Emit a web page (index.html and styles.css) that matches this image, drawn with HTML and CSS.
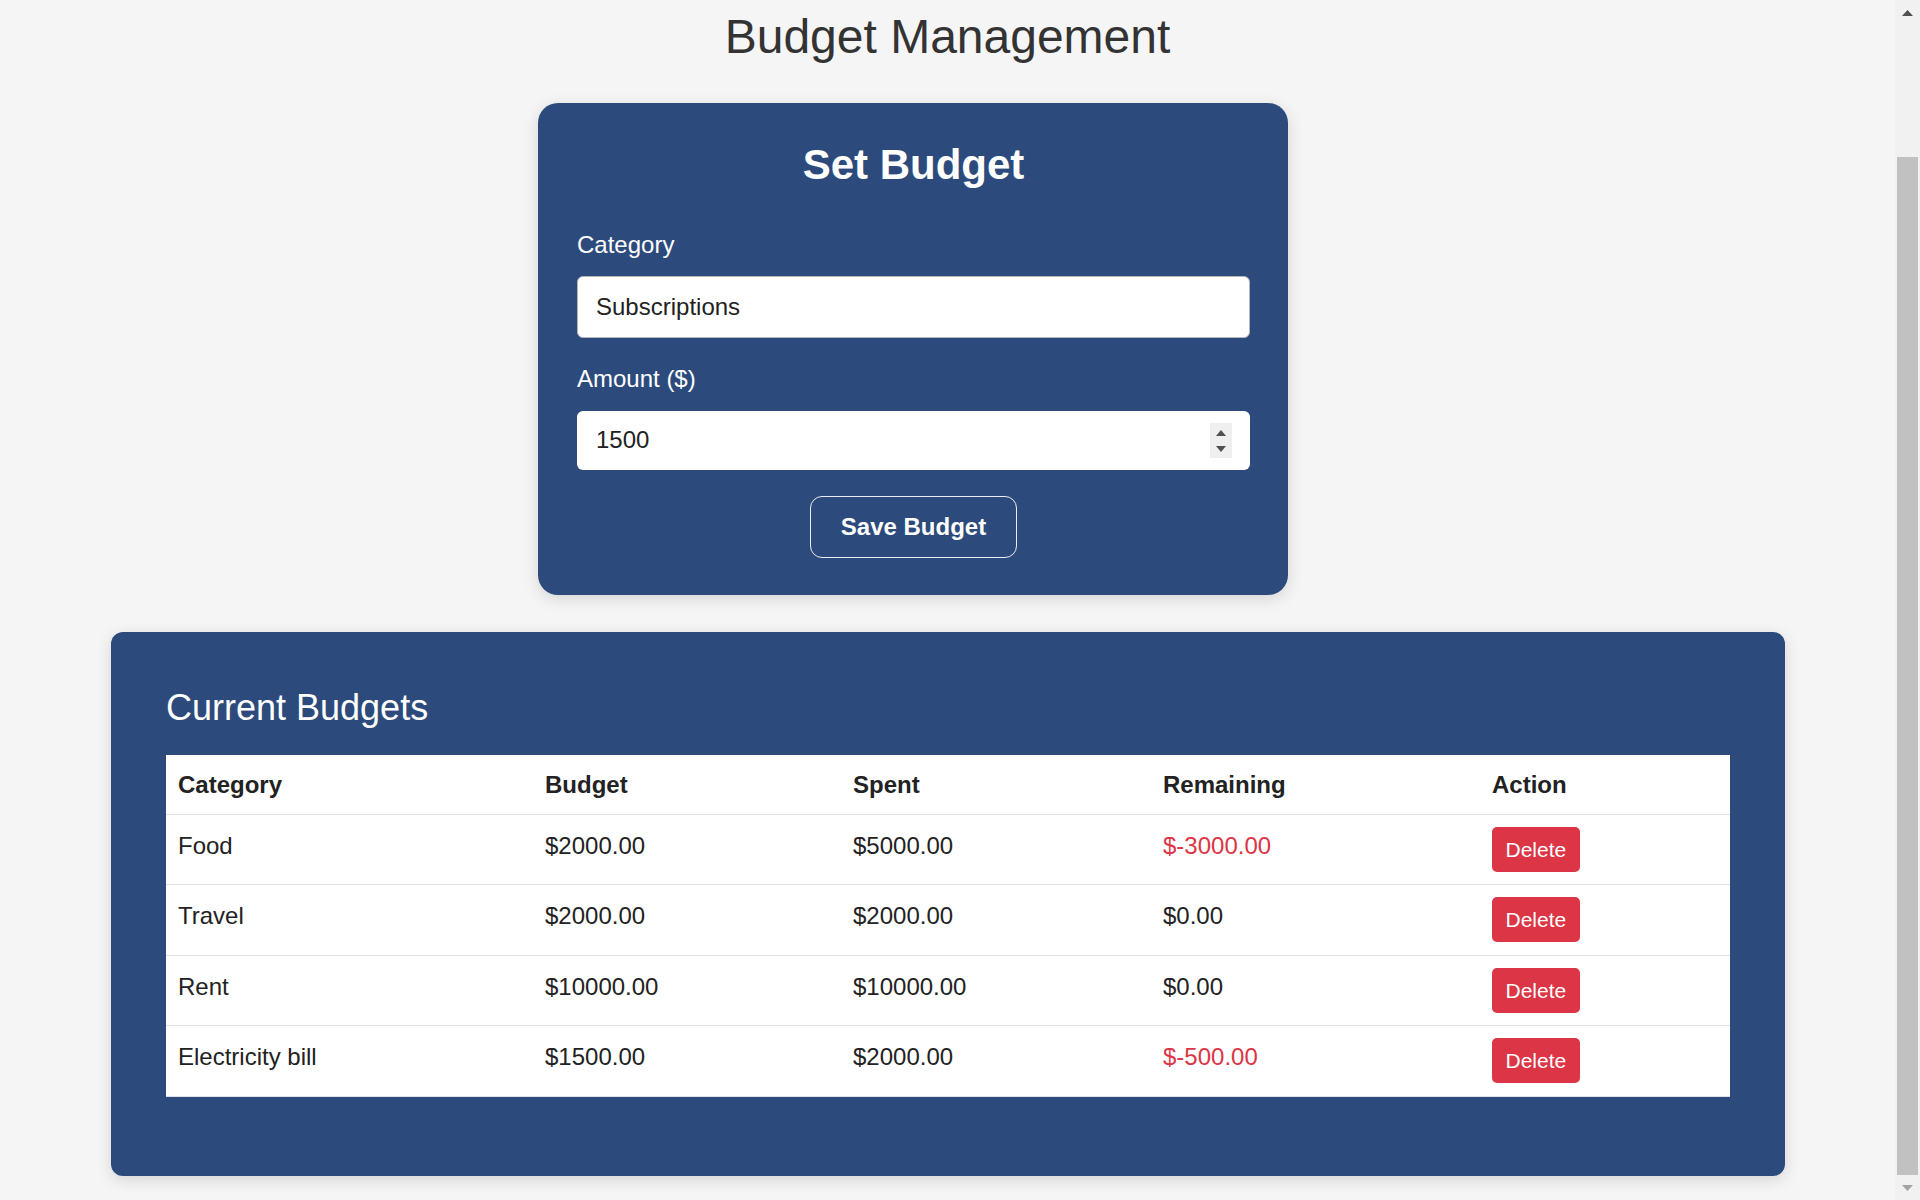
FILE: index.html
```html
<!DOCTYPE html>
<html lang="en">
<head>
<meta charset="utf-8">
<title>Budget Management</title>
<link rel="stylesheet" href="styles.css">
</head>
<body>
<main class="page">
  <h1 class="page-title">Budget Management</h1>

  <form class="budget-form">
    <h2 class="form-title">Set Budget</h2>
    <div class="field">
      <label class="field-label" for="category">Category</label>
      <input class="text-input" id="category" type="text" value="Subscriptions">
    </div>
    <div class="field">
      <label class="field-label" for="amount">Amount ($)</label>
      <div class="number-input">
        <input class="number-value" id="amount" type="text" value="1500">
        <span class="spinner">
          <svg class="spin-arrow" width="10" height="6" viewBox="0 0 10 6"><path d="M5 0 L10 6 L0 6 Z" fill="#505050"/></svg>
          <svg class="spin-arrow" width="10" height="6" viewBox="0 0 10 6"><path d="M0 0 L10 0 L5 6 Z" fill="#505050"/></svg>
        </span>
      </div>
    </div>
    <div class="form-actions">
      <button type="button" class="save-btn">Save Budget</button>
    </div>
  </form>

  <section class="budgets">
    <h2 class="budgets-title">Current Budgets</h2>
    <table class="budget-table">
      <colgroup>
        <col class="col-category">
        <col class="col-budget">
        <col class="col-spent">
        <col class="col-remaining">
        <col class="col-action">
      </colgroup>
      <thead>
        <tr><th>Category</th><th>Budget</th><th>Spent</th><th>Remaining</th><th>Action</th></tr>
      </thead>
      <tbody>
        <tr><td>Food</td><td>$2000.00</td><td>$5000.00</td><td class="negative">$-3000.00</td><td><button type="button" class="delete-btn">Delete</button></td></tr>
        <tr><td>Travel</td><td>$2000.00</td><td>$2000.00</td><td>$0.00</td><td><button type="button" class="delete-btn">Delete</button></td></tr>
        <tr><td>Rent</td><td>$10000.00</td><td>$10000.00</td><td>$0.00</td><td><button type="button" class="delete-btn">Delete</button></td></tr>
        <tr><td>Electricity bill</td><td>$1500.00</td><td>$2000.00</td><td class="negative">$-500.00</td><td><button type="button" class="delete-btn">Delete</button></td></tr>
      </tbody>
    </table>
  </section>
</main>

<aside class="scrollbar" aria-hidden="true">
  <div class="scroll-btn">
    <svg width="11" height="6" viewBox="0 0 11 6"><path d="M5.5 0 L11 6 L0 6 Z" fill="#505050"/></svg>
  </div>
  <div class="scroll-track">
    <div class="scroll-thumb"></div>
  </div>
  <div class="scroll-btn">
    <svg width="11" height="6" viewBox="0 0 11 6"><path d="M0 0 L11 0 L5.5 6 Z" fill="#a3a3a3"/></svg>
  </div>
</aside>
</body>
</html>
```

FILE: styles.css
```css
html, body {
  margin: 0;
  height: 100%;
}

body {
  display: flex;
  overflow: hidden;
  background: #f5f5f5;
  font-family: "Liberation Sans", Arial, sans-serif;
  color: #222;
}

.page {
  flex: 1;
  min-width: 0;
  padding: 9px 0 0;
}

/* imitation of the browser scrollbar (page scrolled to the bottom) */
.scrollbar {
  flex: 0 0 25px;
  display: flex;
  flex-direction: column;
  height: 1200px;
  background: #f1f1f1;
}

.scroll-btn {
  flex: 0 0 25px;
  display: flex;
  align-items: center;
  justify-content: center;
}

.scroll-btn svg {
  display: block;
}

.scroll-track {
  flex: 1;
  display: flex;
  flex-direction: column;
  justify-content: flex-end;
}

.scroll-thumb {
  height: 1018px;
  margin: 0 2px;
  background: #c1c1c1;
}

.page-title {
  margin: 0;
  font-size: 48px;
  font-weight: normal;
  line-height: normal;
  text-align: center;
  color: #333;
}

.budget-form {
  width: 750px;
  box-sizing: border-box;
  margin: 38.5px 0 0 calc(50% - 409.5px);
  padding: 38px 38px 37px 39px;
  background: #2c4b7c;
  border-radius: 20px;
  box-shadow: 0 4px 16px rgba(0, 0, 0, 0.13);
}

.form-title {
  margin: 0 0 42px;
  font-size: 42px;
  font-weight: bold;
  line-height: normal;
  text-align: center;
  color: #fff;
}

.field + .field {
  margin-top: 27.5px;
}

.field-label {
  display: block;
  margin-bottom: 17.5px;
  font-size: 24px;
  line-height: normal;
  color: #fff;
}

.text-input {
  display: block;
  width: 100%;
  height: 61.5px;
  box-sizing: border-box;
  margin: 0;
  padding: 0 18px;
  border: 1.5px solid #b4b4b4;
  border-radius: 6px;
  background: #fff;
  font-family: "Liberation Sans", Arial, sans-serif;
  font-size: 24px;
  color: #222;
  outline: none;
}

.number-input {
  display: flex;
  align-items: center;
  height: 59.3px;
  box-sizing: border-box;
  padding: 0 18px 0 19px;
  background: #fff;
  border-radius: 6px;
}

.number-value {
  flex: 1;
  min-width: 0;
  margin: 0;
  padding: 0;
  border: none;
  outline: none;
  background: transparent;
  font-family: "Liberation Sans", Arial, sans-serif;
  font-size: 24px;
  color: #222;
}

.spinner {
  display: flex;
  flex-direction: column;
  justify-content: space-between;
  align-items: center;
  width: 22px;
  height: 35px;
  box-sizing: border-box;
  padding: 7px 0 5.3px;
  background: #efefef;
}

.spin-arrow {
  display: block;
}

.form-actions {
  display: flex;
  justify-content: center;
  margin-top: 26px;
}

.save-btn {
  height: 62px;
  padding: 0 30px;
  border: 1px solid rgba(255, 255, 255, 0.9);
  border-radius: 12px;
  background: transparent;
  color: #fff;
  font-family: "Liberation Sans", Arial, sans-serif;
  font-size: 24px;
  font-weight: bold;
}

.budgets {
  margin: 37.5px 110px 0 111px;
  padding: 55px;
  background: #2c4b7c;
  border-radius: 12px;
  box-shadow: 0 4px 16px rgba(0, 0, 0, 0.13);
}

.budgets-title {
  margin: 0 0 25.4px;
  font-size: 36px;
  font-weight: normal;
  line-height: normal;
  color: #fff;
}

.budget-table {
  width: 100%;
  margin-bottom: 24px;
  border-collapse: collapse;
  table-layout: fixed;
  background: #fff;
  font-size: 24px;
  color: #222;
}

.col-category { width: 367px; }
.col-budget { width: 308px; }
.col-spent { width: 310px; }
.col-remaining { width: 329px; }

.budget-table th {
  padding: 16px 12px 15px;
  text-align: left;
  font-weight: bold;
  line-height: normal;
  border-bottom: 1px solid #dee2e6;
}

.budget-table td {
  height: 45px;
  padding: 12px;
  text-align: left;
  vertical-align: top;
  line-height: 37px;
  border-bottom: 1px solid #dee2e6;
}

.budget-table tbody tr:nth-child(even) td {
  padding-bottom: 13px;
}

.negative {
  color: #dc3545;
}

.delete-btn {
  height: 45px;
  padding: 0 13.5px;
  border: none;
  border-radius: 5px;
  background: #dc3545;
  color: #fff;
  font-family: "Liberation Sans", Arial, sans-serif;
  font-size: 21px;
  line-height: 45px;
  vertical-align: top;
}
```
